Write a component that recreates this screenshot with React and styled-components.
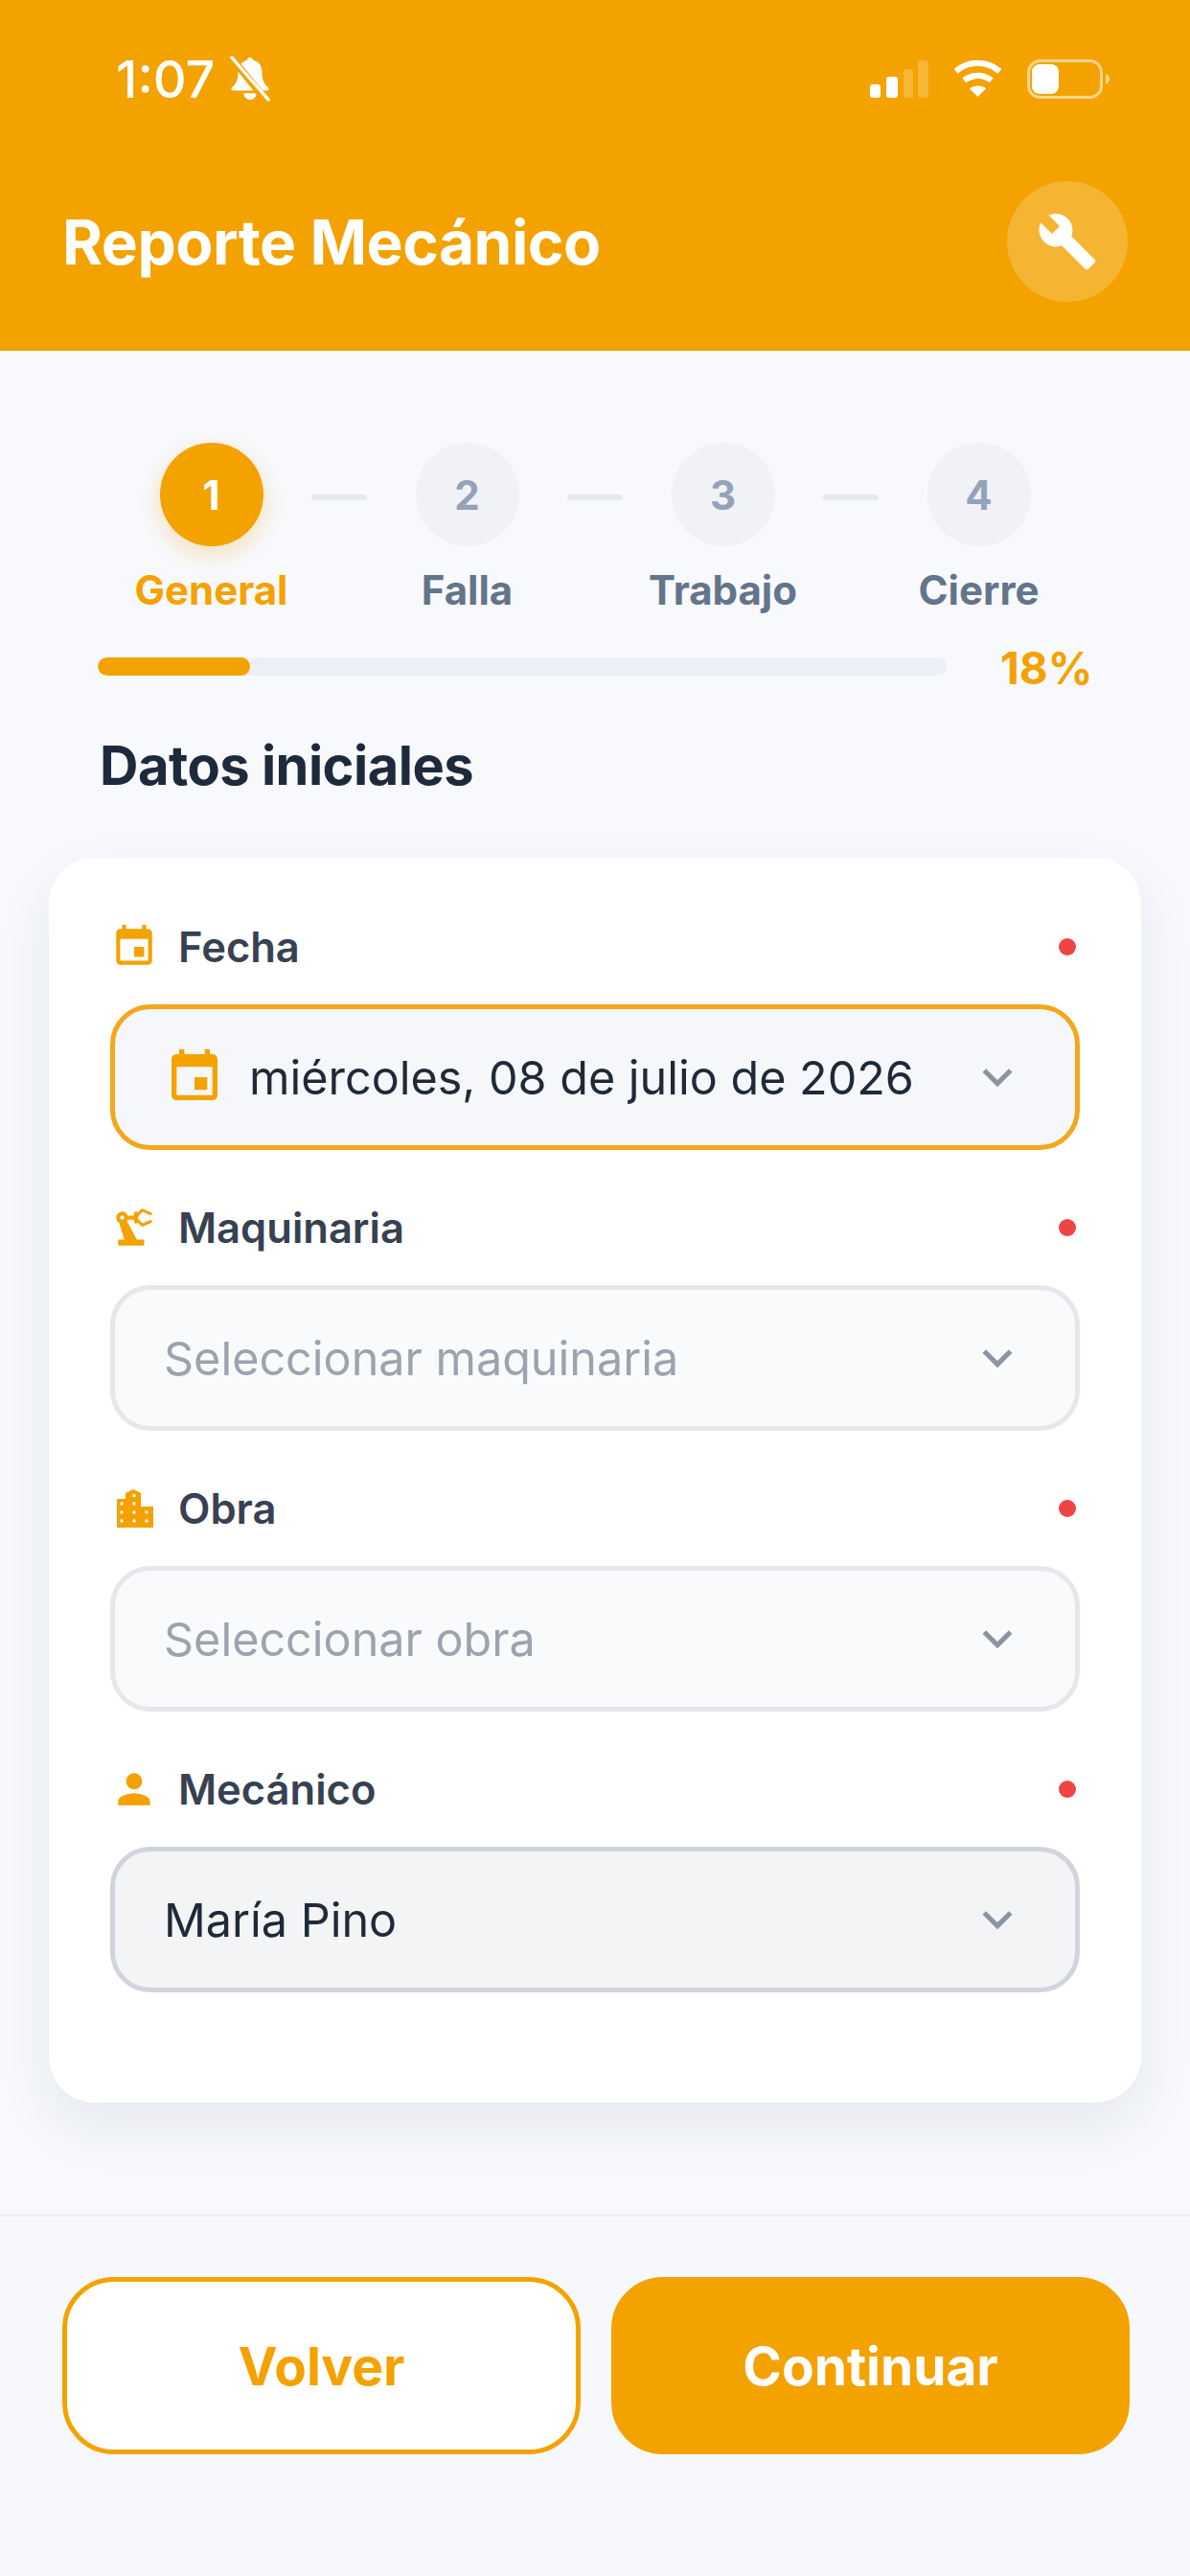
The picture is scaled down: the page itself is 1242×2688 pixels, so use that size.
import React from 'react'
import styled, { createGlobalStyle } from 'styled-components'
import { MdBuild, MdEvent, MdKeyboardArrowDown, MdPerson, MdPrecisionManufacturing } from 'react-icons/md'

const orange = '#f4a200'

const GlobalStyle = createGlobalStyle`
	html, body {
		margin: 0;
		padding: 0;
		background: #f7f9fc;
	}
	* {
		box-sizing: border-box;
	}
`

const Page = styled.div`
	width: 1242px;
	height: 2688px;
	display: flex;
	flex-direction: column;
	overflow: hidden;
	font-family: Inter, "Liberation Sans", sans-serif;
	background: #f7f9fc;
`

const Header = styled.header`
	height: 366px;
	flex-shrink: 0;
	background: ${orange};
	color: #fff;
	padding: 52px 65px 0;
`

const StatusBar = styled.div`
	height: 60px;
	display: flex;
	align-items: center;
	justify-content: space-between;
	padding: 0 19px 0 56px;
`

const TimeGroup = styled.div`
	display: flex;
	align-items: center;
	gap: 15px;
`

const Time = styled.span`
	font-size: 54px;
	font-weight: 500;
`

const StatusIcons = styled.div`
	display: flex;
	align-items: center;
	gap: 25px;
`

const TitleRow = styled.div`
	height: 126px;
	margin-top: 77px;
	display: flex;
	align-items: center;
	justify-content: space-between;
`

const Title = styled.h1`
	margin: 0;
	font-size: 64px;
	font-weight: 700;
	letter-spacing: -0.5px;
`

const ToolButton = styled.div`
	width: 126px;
	height: 126px;
	border-radius: 50%;
	background: rgba(255, 255, 255, 0.2);
	display: flex;
	align-items: center;
	justify-content: center;
	font-size: 64px;
`

const Content = styled.main`
	flex: 1;
	padding: 96px 51px 0;
`

const Stepper = styled.div`
	display: flex;
	justify-content: center;
	align-items: flex-start;
`

const Step = styled.div`
	width: 162px;
	display: flex;
	flex-direction: column;
	align-items: center;
	flex-shrink: 0;
`

const StepCircle = styled.div`
	width: 108px;
	height: 108px;
	border-radius: 50%;
	display: flex;
	align-items: center;
	justify-content: center;
	font-size: 42px;
	font-weight: 700;
	background: ${p => (p.$active ? orange : '#f0f2f7')};
	color: ${p => (p.$active ? '#fff' : '#94a3b8')};
	box-shadow: ${p => (p.$active ? '0 8px 24px rgba(245, 163, 0, 0.28)' : 'none')};
`

const StepLabel = styled.span`
	margin-top: 21px;
	font-size: 42px;
	line-height: 50px;
	font-weight: 700;
	white-space: nowrap;
	color: ${p => (p.$active ? orange : '#64748b')};
`

const Connector = styled.div`
	width: 58px;
	height: 6px;
	margin: 54px 23.5px 0;
	flex-shrink: 0;
	border-radius: 3px;
	background: #e5e8ee;
`

const ProgressRow = styled.div`
	height: 50px;
	margin: 29px 0 0 51px;
	display: flex;
	align-items: center;
`

const ProgressTrack = styled.div`
	width: 886px;
	height: 19px;
	border-radius: 10px;
	background: #ecf0f6;
	overflow: hidden;
`

const ProgressFill = styled.div`
	height: 100%;
	border-radius: 10px;
	background: ${orange};
`

const ProgressValue = styled.span`
	margin-left: 56px;
	padding-top: 4px;
	font-size: 46px;
	font-weight: 700;
	color: ${orange};
`

const SectionTitle = styled.h2`
	margin: 46px 0 0 53px;
	font-size: 56px;
	line-height: 66px;
	font-weight: 700;
	letter-spacing: -0.5px;
	color: #1e293b;
`

const Card = styled.section`
	height: 1299px;
	margin-top: 63px;
	padding: 60px 64px 0;
	border-radius: 48px;
	background: #fff;
	box-shadow: 0 24px 60px rgba(30, 41, 59, 0.08);
`

const Field = styled.div`
	margin-bottom: 48px;
`

const LabelRow = styled.div`
	height: 66px;
	display: flex;
	align-items: center;
	color: ${orange};
	font-size: 50px;
`

const LabelText = styled.label`
	margin-left: 21px;
	flex: 1;
	font-size: 43.500px;
	font-weight: 600;
	color: #374151;
`

const RequiredDot = styled.span`
	width: 18px;
	height: 18px;
	margin-right: 4px;
	border-radius: 50%;
	background: #ef4444;
`

const Select = styled.div`
	height: 152px;
	margin-top: 27px;
	padding: 0 51px;
	display: flex;
	align-items: center;
	border-radius: 42px;
	border: 5px solid ${p => ({ active: '#f4a61c', disabled: '#d1d5db' }[p.$variant] || '#e5e7eb')};
	background: ${p => ({ active: '#f5f7fb', disabled: '#f3f4f6' }[p.$variant] || '#f9fafb')};
	font-size: 48.500px;
	color: ${p => (p.$placeholder ? '#9ca3af' : '#1f2937')};
`

const SelectIcon = styled.span`
	display: flex;
	margin-right: 25px;
	font-size: 64px;
	color: ${orange};
`

const SelectText = styled.span`
	flex: 1;
	white-space: nowrap;
`

const Chevron = styled.span`
	display: flex;
	margin-right: -1px;
	font-size: 62px;
	color: #8c94a3;
`

const Footer = styled.footer`
	height: 377px;
	flex-shrink: 0;
	padding: 63px 63px 0 65px;
	display: grid;
	grid-template-columns: 1fr 1fr;
	grid-auto-rows: 185px;
	gap: 32px;
	border-top: 2px solid #eceff4;
	background: #f6f8fb;
`

const Button = styled.button`
	border-radius: 54px;
	border: 5px solid ${orange};
	background: ${p => (p.$primary ? orange : '#fff')};
	color: ${p => (p.$primary ? '#fff' : orange)};
	font-family: inherit;
	font-size: 55px;
	font-weight: 700;
`

function BellOff() {
	return (
		<svg width="44" height="48" viewBox="0 0 44 50" fill="#fff">
			<path d="M22 2c2 0 3 1.400 3 3 7 1.500 10 6.500 10 13 0 8 2 13 7 17 1 1.500 0 3-2 3H4c-2 0-3-1.500-2-3 5-4 7-9 7-17 0-6.500 3-11.500 10-13 0-1.600 1-3 3-3z" />
			<path d="M15 41h14c-.5 5-3.500 7-7 7s-6.500-2-7-7z" />
			<path d="M3 4l36 44" stroke={orange} strokeWidth="8" />
			<path d="M2 2l40 46" stroke="#fff" strokeWidth="3.500" strokeLinecap="round" />
		</svg>
	)
}

function SignalBars() {
	return (
		<svg width="61" height="39" viewBox="0 0 61 39" fill="#fff">
			<rect x="0" y="25" width="11" height="14" rx="3" />
			<rect x="17" y="17" width="12" height="22" rx="3" />
			<rect x="35" y="9" width="10" height="30" rx="3" opacity="0.22" />
			<rect x="50" y="0" width="11" height="39" rx="3" opacity="0.22" />
		</svg>
	)
}

function Wifi() {
	return (
		<svg width="53" height="40" viewBox="0 0 54 42" fill="none" stroke="#fff" strokeWidth="6.500">
			<path d="M3 13c14-12 34-12 48 0" />
			<path d="M12 23c9-7 21-7 30 0" />
			<path d="M27 41l-9-9c5-4 13-4 18 0z" fill="#fff" stroke="none" />
		</svg>
	)
}

function Battery() {
	return (
		<svg width="86" height="41" viewBox="0 0 86 41" fill="none">
			<rect x="1.500" y="1.500" width="76" height="38" rx="12" stroke="#fff" strokeOpacity="0.55" strokeWidth="3" />
			<rect x="5" y="5" width="28" height="31" rx="8" fill="#fff" />
			<path d="M82 15c3 1 4 3 4 5.500s-1 4.500-4 5.500z" fill="#fff" fillOpacity="0.55" />
		</svg>
	)
}

function Building() {
	return (
		<svg width="1em" height="1em" viewBox="0 0 50 50">
			<path
				fillRule="evenodd"
				fill="currentColor"
				d="M7 15h9V9l8-4 8 4v14h13v22H7zM10.500 18.500v3h3v-3zM10.500 27.500v3h3v-3zM10.500 36.500v3h3v-3zM23.500 10v3h3v-3zM23.500 18.500v3h3v-3zM23.500 27.500v3h3v-3zM23.500 36.500v3h3v-3zM36.500 27.500v3h3v-3zM36.500 36.500v3h3v-3z"
			/>
		</svg>
	)
}

const steps = ['General', 'Falla', 'Trabajo', 'Cierre']

const fields = [
	{ label: 'Fecha', icon: <MdEvent />, value: 'miércoles, 08 de julio de 2026', variant: 'active', selectIcon: <MdEvent /> },
	{ label: 'Maquinaria', icon: <MdPrecisionManufacturing />, value: 'Seleccionar maquinaria', placeholder: true },
	{ label: 'Obra', icon: <Building />, value: 'Seleccionar obra', placeholder: true },
	{ label: 'Mecánico', icon: <MdPerson />, value: 'María Pino', variant: 'disabled' }
]

export default function App() {
	return (
		<Page>
			<GlobalStyle />
			<Header>
				<StatusBar>
					<TimeGroup>
						<Time>1:07</Time>
						<BellOff />
					</TimeGroup>
					<StatusIcons>
						<SignalBars />
						<Wifi />
						<Battery />
					</StatusIcons>
				</StatusBar>
				<TitleRow>
					<Title>Reporte Mecánico</Title>
					<ToolButton><MdBuild /></ToolButton>
				</TitleRow>
			</Header>
			<Content>
				<Stepper>
					{steps.map((label, i) => (
						<React.Fragment key={label}>
							{i > 0 && <Connector />}
							<Step>
								<StepCircle $active={i === 0}>{i + 1}</StepCircle>
								<StepLabel $active={i === 0}>{label}</StepLabel>
							</Step>
						</React.Fragment>
					))}
				</Stepper>
				<ProgressRow>
					<ProgressTrack>
						<ProgressFill style={{ width: '18%' }} />
					</ProgressTrack>
					<ProgressValue>18%</ProgressValue>
				</ProgressRow>
				<SectionTitle>Datos iniciales</SectionTitle>
				<Card>
					{fields.map(field => (
						<Field key={field.label}>
							<LabelRow>
								{field.icon}
								<LabelText>{field.label}</LabelText>
								<RequiredDot />
							</LabelRow>
							<Select $variant={field.variant} $placeholder={field.placeholder}>
								{field.selectIcon && <SelectIcon>{field.selectIcon}</SelectIcon>}
								<SelectText>{field.value}</SelectText>
								<Chevron><MdKeyboardArrowDown /></Chevron>
							</Select>
						</Field>
					))}
				</Card>
			</Content>
			<Footer>
				<Button>Volver</Button>
				<Button $primary>Continuar</Button>
			</Footer>
		</Page>
	)
}
